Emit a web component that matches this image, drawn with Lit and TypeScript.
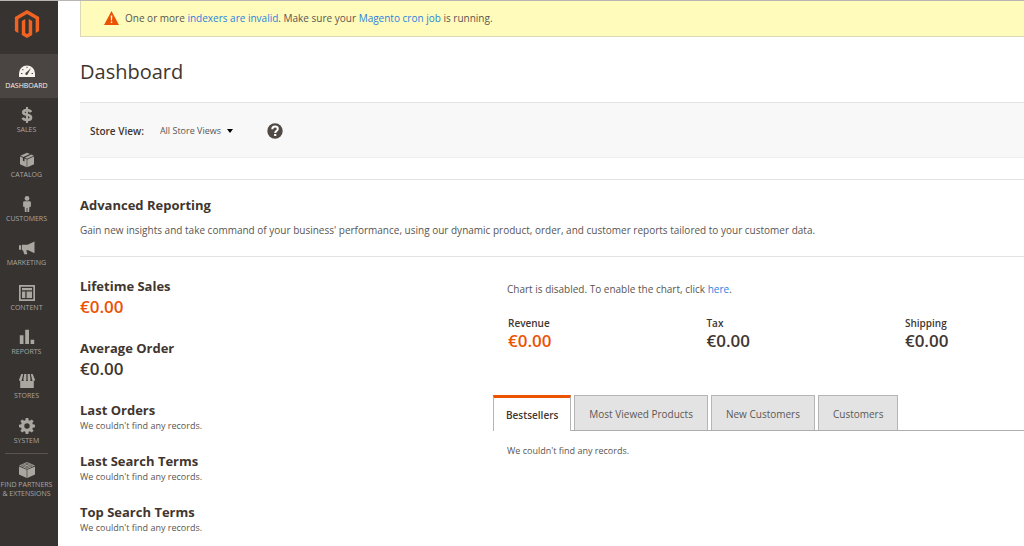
import { LitElement, html, css, svg } from "lit";
import { customElement, state } from "lit/decorators.js";
import { classMap } from "lit/directives/class-map.js";

const icons = {
  dashboard: svg`<path fill-rule="evenodd" d="M0 14V10.500a8 8 0 0 1 16 0V14zM2 10v1.100h1.400V10zm1.700-4.100-.7.800 1 .9.700-.8zM7.500 3.700v1.400h1V3.700zM12.600 10v1.100H14V10zM12.100 5 7.500 9.300a1.300 1.300 0 1 0 1.400 1.400z"/>`,
  sales: svg`<path fill="none" stroke="currentColor" stroke-width="2.700" d="M12 5.200C11.300 3.800 10 3.200 8 3.200 5.600 3.200 4.300 4 4.300 5.500 4.300 9 12 6.500 12 10.400c0 1.700-1.500 2.500-4 2.500-2.300 0-3.700-.7-4.300-2.200"/><path d="M7 0h2v16H7z"/>`,
  catalog: svg`<path d="M8 .8 11 2 4.400 5 1.300 3.700zM12.300 2.500l2.600 1.200L8 6.700 5.800 5.700zM1 4.600l2.900 1.200v3l1.600.8V6.500l2.200.9v7.800L1 12.300zM15 4.600v7.700l-6.700 2.900V7.400z"/>`,
  customers: svg`<circle cx="8" cy="2.400" r="2.400"/><path d="M5.400 5.200h5.200q1.300 0 1.300 1.300v4.200h-1.400v-.4l-.4 5.700H8.400v-4h-.8v4H5.900l-.4-5.700v.4H4.100V6.500q0-1.300 1.300-1.300z"/>`,
  marketing: svg`<path d="M15.500 1.500v11.700L9.300 10.300H7.200l1.200 4H5.300L4 10.300H3V4.800h5.500zM0 5.300h2.200v4.500H0z"/>`,
  content: svg`<path fill-rule="evenodd" d="M0 0h16v16H0zM1.700 1.700v12.600h12.600V1.700zM3 3h10v2.200H3zM3 6.600h3.300V13H3zM7.600 6.600H13V13H7.600z"/>`,
  reports: svg`<path d="M.8 6.200h3.700V15H.8zM6.200.8H10V15H6.200zM11.600 10.800h3.600V15h-3.600z"/>`,
  stores: svg`<path d="M2.300 1h1.900L2.900 6.800a1.400 1.400 0 0 1-2.900 0zM5.200 1h2.200v5.800a1.500 1.500 0 0 1-3 0zM8.600 1h2.200l.8 5.800a1.500 1.500 0 0 1-3 0zM11.800 1h1.900L16 6.800a1.400 1.400 0 0 1-2.900 0zM1.200 8.100h13.600V15H1.200z"/>`,
  system: svg`<path fill-rule="evenodd" d="M6.700 0h2.600l.4 2.200 1.200.5 1.900-1.300 1.800 1.800-1.300 1.900.5 1.200 2.200.4v2.600l-2.200.4-.5 1.200 1.300 1.900-1.800 1.800-1.900-1.300-1.200.5-.4 2.200H6.700l-.4-2.200-1.200-.5-1.900 1.300-1.800-1.800 1.300-1.900-.5-1.200L0 9.300V6.700l2.200-.4.500-1.200-1.300-1.900 1.800-1.800 1.900 1.300 1.200-.5zM8 5.300a2.700 2.700 0 1 0 0 5.400 2.700 2.700 0 0 0 0-5.400z"/>`,
  partners: svg`<path d="M0 4.400l7.700 3.300V16L0 12.500zM16 4.400v8.100L8.300 16V7.700z"/><path d="M8 0l7.900 3.600L8 7.200.1 3.600z"/><g fill="none" stroke="#373330" stroke-width=".6"><ellipse cx="8" cy="1.900" rx="1.700" ry=".7"/><ellipse cx="4.500" cy="3.600" rx="1.700" ry=".7"/><ellipse cx="11.500" cy="3.600" rx="1.700" ry=".7"/><ellipse cx="8" cy="5.300" rx="1.700" ry=".7"/></g>`,
};

const sections: { label: string; icon: keyof typeof icons }[] = [
  { label: "Dashboard", icon: "dashboard" },
  { label: "Sales", icon: "sales" },
  { label: "Catalog", icon: "catalog" },
  { label: "Customers", icon: "customers" },
  { label: "Marketing", icon: "marketing" },
  { label: "Content", icon: "content" },
  { label: "Reports", icon: "reports" },
  { label: "Stores", icon: "stores" },
  { label: "System", icon: "system" },
];

@customElement("admin-menu")
class AdminMenu extends LitElement {
  static styles = css`
    :host {
      display: block;
      background: #373330;
      color: #aaa6a0;
    }
    .logo {
      display: block;
      height: 28px;
      padding: 9px 5px 16px 0;
      text-align: center;
    }
    .logo-mark {
      width: 28px;
      height: 28px;
      fill: #f26322;
    }
    .items {
      list-style: none;
      margin: 0;
      padding: 0;
      display: grid;
      grid-auto-rows: 1fr;
      height: 399px;
    }
    .link {
      box-sizing: border-box;
      height: 100%;
      display: flex;
      flex-direction: column;
      align-items: center;
      gap: 2px;
      padding: 9px 5px 0 0;
      color: inherit;
      text-decoration: none;
      text-transform: uppercase;
      font-size: 7px;
      line-height: 9px;
      text-align: center;
      white-space: nowrap;
    }
    .active {
      background: #4a4542;
      color: #f7f3eb;
    }
    .icon {
      flex: none;
      width: 16px;
      height: 16px;
      fill: currentColor;
    }
    .divider {
      margin: 0 10px 0 5px;
      border: 0;
      border-top: 1px solid #5a5350;
    }
    .partners {
      height: auto;
      padding-top: 8px;
    }
  `;

  render() {
    return html`
      <a class="logo" href="#" aria-label="Magento Admin">
        <svg class="logo-mark" viewBox="0 0 24 24">
          <path d="M12 24l-4.450-2.570V9.380l2.970-1.720v12.050l1.480.910 1.490-.910V7.660l2.970 1.720v12.050zM22.390 6v11.990l-2.970 1.720V7.710L12 3.430 4.570 7.710v12.010l-2.960-1.730V6L12 0z" />
        </svg>
      </a>
      <nav>
        <ul class="items">
          ${sections.map(
            (s, i) => html`<li>
              <a class=${classMap({ link: true, active: i === 0 })} href="#">
                <svg class="icon" viewBox="0 0 16 16" aria-hidden="true">${icons[s.icon]}</svg>
                <span>${s.label}</span>
              </a>
            </li>`
          )}
        </ul>
        <hr class="divider" />
        <a class="link partners" href="#">
          <svg class="icon" viewBox="0 0 16 16" aria-hidden="true">${icons.partners}</svg>
          <span>Find Partners<br />&amp; Extensions</span>
        </a>
      </nav>
    `;
  }
}

@customElement("dashboard-tabs")
class DashboardTabs extends LitElement {
  @state() private selected = 0;

  private tabs = ["Bestsellers", "Most Viewed Products", "New Customers", "Customers"];

  static styles = css`
    :host {
      display: block;
    }
    .tabs {
      display: flex;
      gap: 3px;
      border-bottom: 1px solid #adadad;
    }
    .tab {
      box-sizing: border-box;
      height: 35px;
      padding: 2px 14px 0;
      border: 1px solid #b5b5b5;
      border-bottom: 0;
      background: #e3e3e3;
      color: #5c5855;
      font: 400 10px/16px "Open Sans", sans-serif;
    }
    .selected {
      height: 36px;
      margin-bottom: -1px;
      padding: 0 12px;
      border-top: 3px solid #eb5202;
      background: #fff;
      color: #41362f;
      font-weight: 600;
    }
    .panel {
      margin: 0;
      padding: 14px;
      font-size: 9px;
      line-height: 12px;
    }
  `;

  render() {
    return html`
      <div class="tabs" role="tablist">
        ${this.tabs.map(
          (t, i) => html`<button
            class=${classMap({ tab: true, selected: i === this.selected })}
            role="tab"
            aria-selected=${i === this.selected}
            @click=${() => (this.selected = i)}
          >${t}</button>`
        )}
      </div>
      <p class="panel" role="tabpanel">We couldn't find any records.</p>
    `;
  }
}

@customElement("app-root")
class AppRoot extends LitElement {
  static styles = css`
    :host {
      box-sizing: border-box;
      display: grid;
      grid-template-columns: 58px minmax(0, 1fr);
      min-height: 100vh;
      border-top: 1px solid #b8b5b2;
      background: #fff;
      color: #5a5551;
      font: 400 10px/14px "Open Sans", sans-serif;
    }
    .page {
      padding-left: 22px;
    }
    .link {
      color: #2b82e0;
      text-decoration: none;
    }
    .notice {
      display: flex;
      align-items: center;
      gap: 6px;
      box-sizing: border-box;
      height: 36px;
      padding: 0 0 1px 23px;
      border-left: 1px solid #dbd8b8;
      border-bottom: 1px solid #dbd8b8;
      background: #fffbbb;
    }
    .warning {
      width: 15px;
      height: 14px;
    }
    .title {
      margin: 20px 0 16px;
      color: #41362f;
      font-size: 20px;
      line-height: 29px;
      font-weight: 400;
    }
    .toolbar {
      display: flex;
      align-items: center;
      box-sizing: border-box;
      height: 56px;
      padding: 2px 0 0 10px;
      border-top: 1px solid #e3e3e3;
      border-bottom: 1px solid #eee;
      background: #f8f8f8;
    }
    .label {
      color: #41362f;
      font-size: 10px;
      font-weight: 600;
    }
    .select {
      display: flex;
      align-items: center;
      margin: 0 34px 0 16px;
    }
    .stores {
      appearance: none;
      margin: 0;
      padding: 0 12px 0 0;
      border: 0;
      background: none;
      color: #5a5551;
      font: 400 9px/14px "Open Sans", sans-serif;
    }
    .caret {
      width: 6px;
      height: 4px;
      margin-left: -7px;
      pointer-events: none;
    }
    .help {
      display: flex;
      padding: 0;
      border: 0;
      background: none;
    }
    .help-icon {
      width: 16px;
      height: 16px;
    }
    .reporting {
      margin-top: 21px;
      padding: 15px 0 19px;
      border: 1px solid #e3e3e3;
      border-width: 1px 0;
    }
    .heading {
      margin: 0;
      color: #41362f;
      font-size: 13px;
      line-height: 20px;
      font-weight: 700;
    }
    .intro {
      margin: 8px 0 0;
    }
    .columns {
      display: grid;
      grid-template-columns: 7fr 9fr;
      padding-top: 19px;
    }
    .amount {
      margin: 0;
      color: #41362f;
      font-size: 17px;
      line-height: 22px;
      font-weight: 600;
    }
    .accent {
      color: #eb5202;
    }
    .stat {
      margin-bottom: 20px;
    }
    .records {
      margin-bottom: 19px;
    }
    .empty {
      margin: 0;
      font-size: 9px;
      line-height: 12px;
    }
    .chart {
      margin: 6px 0 20px 14px;
    }
    .totals {
      display: grid;
      grid-template-columns: 5fr 5fr 3fr;
      margin: 0 0 43px 15px;
    }
  `;

  private stat(name: string, accent: boolean) {
    return html`<section class="stat">
      <h2 class="heading">${name}</h2>
      <p class=${classMap({ amount: true, accent })}>€0.00</p>
    </section>`;
  }

  private records(name: string) {
    return html`<section class="records">
      <h2 class="heading">${name}</h2>
      <p class="empty">We couldn't find any records.</p>
    </section>`;
  }

  private total(name: string, accent: boolean) {
    return html`<div>
      <span class="label">${name}</span>
      <p class=${classMap({ amount: true, accent })}>€0.00</p>
    </div>`;
  }

  render() {
    return html`
      <admin-menu></admin-menu>
      <main class="page">
        <div class="notice" role="status">
          <svg class="warning" viewBox="0 0 15 14" aria-hidden="true">
            <path fill="#eb5202" d="M7.500 0 15 14H0z" />
            <path fill="#fff" d="M6.700 4.500h1.600l-.3 5H7zM6.800 10.500h1.400V12H6.800z" />
          </svg>
          <span
            >One or more <a class="link" href="#">indexers are invalid</a>. Make sure your
            <a class="link" href="#">Magento cron job</a> is running.</span
          >
        </div>
        <h1 class="title">Dashboard</h1>
        <div class="toolbar">
          <label class="label" for="store">Store View:</label>
          <div class="select">
            <select class="stores" id="store">
              <option>All Store Views</option>
            </select>
            <svg class="caret" viewBox="0 0 6 4" aria-hidden="true"><path d="M0 0h6L3 4z" /></svg>
          </div>
          <button class="help" aria-label="Help">
            <svg class="help-icon" viewBox="0 0 16 16" aria-hidden="true">
              <circle cx="8" cy="8" r="7.700" fill="#514943" />
              <path fill="none" stroke="#fff" stroke-width="2" d="M5.300 6.200C5.300 4.400 6.400 3.600 8 3.600s2.800.8 2.800 2.300C10.800 7.600 8.200 7.800 8.200 10" />
              <path fill="#fff" d="M7.100 11h2.200v2H7.100z" />
            </svg>
          </button>
        </div>
        <section class="reporting">
          <h2 class="heading">Advanced Reporting</h2>
          <p class="intro">
            Gain new insights and take command of your business' performance, using our dynamic product, order, and
            customer reports tailored to your customer data.
          </p>
        </section>
        <div class="columns">
          <div>
            ${this.stat("Lifetime Sales", true)} ${this.stat("Average Order", false)}
            ${this.records("Last Orders")} ${this.records("Last Search Terms")}
            ${this.records("Top Search Terms")}
          </div>
          <div>
            <p class="chart">Chart is disabled. To enable the chart, click <a class="link" href="#">here</a>.</p>
            <div class="totals">
              ${this.total("Revenue", true)} ${this.total("Tax", false)} ${this.total("Shipping", false)}
            </div>
            <dashboard-tabs></dashboard-tabs>
          </div>
        </div>
      </main>
    `;
  }
}
